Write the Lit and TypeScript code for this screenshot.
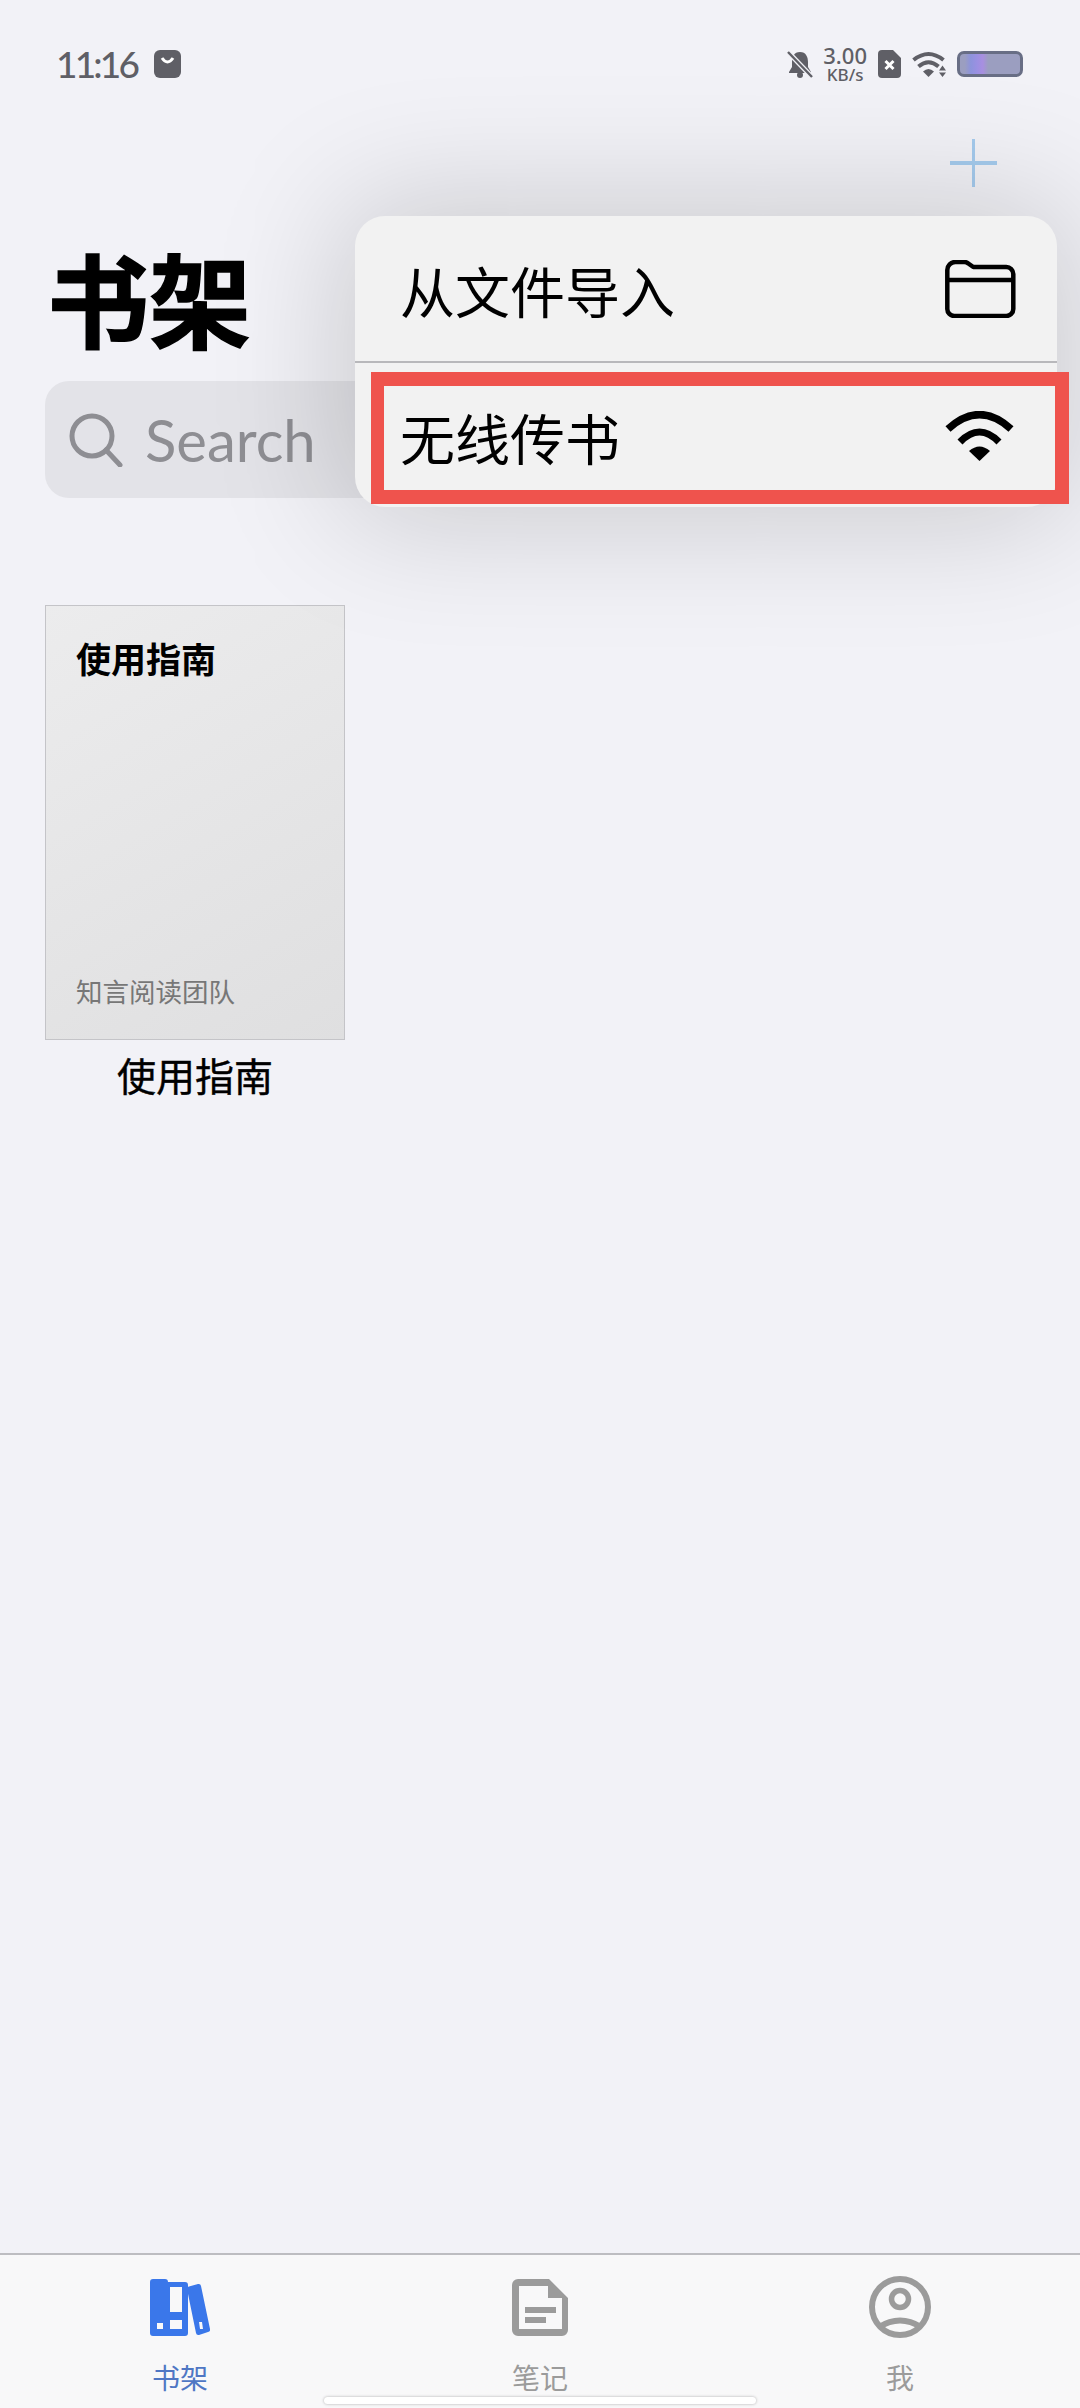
import { LitElement, html, css } from 'lit';
import { customElement, state } from 'lit/decorators.js';
import { classMap } from 'lit/directives/class-map.js';

const statusGrey = '#5f5f66';

const bellIcon = html`<svg class="bell" viewBox="0 0 26 27">
  <path fill="${statusGrey}" d="M13 1C7 1 5 6 5 11v5l-3 5v1h22v-1l-3-5v-5C21 6 19 1 13 1Z" />
  <circle cx="13" cy="24" r="3" fill="${statusGrey}" />
  <path d="M1 1 25 26" stroke="#f1f1f6" stroke-width="5" />
  <path d="M1 1 25 26" stroke="${statusGrey}" stroke-width="2.4" />
</svg>`;

const simIcon = html`<svg class="sim" viewBox="0 0 23 28">
  <path fill="${statusGrey}" d="M4 0h11l8 8v16a4 4 0 0 1-4 4H4a4 4 0 0 1-4-4V4a4 4 0 0 1 4-4Z" />
  <path d="M7.500 11 15.500 19M15.500 11 7.500 19" stroke="#fff" stroke-width="3" />
</svg>`;

const statusWifi = html`<svg class="status-wifi" viewBox="0 0 35 26" fill="none" stroke="${statusGrey}">
  <path stroke-width="4" d="M1.500 9Q16.500 -3 31.500 9" />
  <path stroke-width="4" d="M6.500 15.500Q16.500 7 26.500 15.500" />
  <path stroke="none" fill="${statusGrey}" d="M11 20.500Q16.500 15.500 22 20.500L16.500 26Z" />
  <path stroke="none" fill="${statusGrey}" d="M27 19.500l3.500-5 3.500 5ZM27 21.500h7l-3.500 4.500Z" />
</svg>`;

const folderIcon = html`<svg class="folder" viewBox="0 0 71 58" fill="none" stroke="#000" stroke-width="4.500">
  <path stroke-linejoin="round" d="M2.300 10a8 8 0 0 1 8-8h9a6 6 0 0 1 4 1.500l5 3.500h33a7 7 0 0 1 7 7v35a7 7 0 0 1-7 7H9.300a7 7 0 0 1-7-7Z" />
  <path d="M2.300 20H68.500" />
</svg>`;

const wifiIcon = html`<svg class="wifi" viewBox="0 0 69 50" fill="none" stroke="#000">
  <path stroke-width="7.500" d="M3 18Q34.500 -10.600 66 18" />
  <path stroke-width="7" d="M15 31Q34.500 11 54 31" />
  <path stroke="none" fill="#000" d="M24 40Q34.500 31 45 40L34.500 50Z" />
</svg>`;

const shelfIcon = html`<svg viewBox="0 0 60 57" width="60" height="57" fill="#3a77ea">
  <path fill-rule="evenodd" d="M3 0h12a3 3 0 0 1 3 3h17a3 3 0 0 1 3 3v48a3 3 0 0 1-3 3H3a3 3 0 0 1-3-3V3a3 3 0 0 1 3-3ZM20 8v25h12V8ZM20 41v9h12v-9ZM7 44v6h6v-6Z" />
  <path fill-rule="evenodd" d="M39 7.500 48 5a2.500 2.500 0 0 1 3 2l9 43a2.500 2.500 0 0 1-2 3l-9 3a2.500 2.500 0 0 1-3-2L37 10a2.500 2.500 0 0 1 2-2.500ZM49 43l1 7h3l-1-7Z" />
</svg>`;

const noteIcon = html`<svg viewBox="0 0 56 57" width="56" height="57" fill="#9b9b9b">
  <path fill-rule="evenodd" d="M6 0h31l19 19v32a6 6 0 0 1-6 6H6a6 6 0 0 1-6-6V6a6 6 0 0 1 6-6ZM7 7v43h43V19H36V7Z" />
  <rect x="13" y="28" width="31" height="6" />
  <rect x="13" y="38" width="21" height="6" />
</svg>`;

const meIcon = html`<svg viewBox="0 0 62 62" width="62" height="62" fill="none" stroke="#9b9b9b">
  <circle cx="31" cy="31" r="28" stroke-width="6" />
  <circle cx="31" cy="23" r="8.500" stroke-width="5.500" />
  <path stroke-width="6" d="M10 51Q31 38 52 51" />
</svg>`;

@customElement('app-root')
export class AppRoot extends LitElement {
  @state() private activeTab = 0;

  private tabs = [
    { label: '书架', icon: shelfIcon },
    { label: '笔记', icon: noteIcon },
    { label: '我', icon: meIcon },
  ];

  static styles = css`
    :host {
      display: block;
      width: 1080px;
      height: 2408px;
      font-family: 'Noto Sans CJK SC', 'Noto Sans', sans-serif;
      color: #000;
    }

    .page {
      position: relative;
      width: 100%;
      height: 100%;
      display: flex;
      flex-direction: column;
      background: #f2f2f7;
      overflow: hidden;
    }

    /* status bar */
    .status {
      display: flex;
      align-items: center;
      justify-content: space-between;
      height: 40px;
      margin-top: 44px;
      padding: 0 57px 0 56px;
      color: #5f5f66;
    }
    .status-left,
    .status-right {
      display: flex;
      align-items: center;
    }
    .time {
      font-family: Lato, 'Noto Sans', sans-serif;
      font-size: 37px;
      font-weight: 500;
      line-height: 40px;
      letter-spacing: -2.8px;
    }
    .notify {
      display: block;
      width: 27px;
      height: 28px;
      margin-left: 17px;
    }
    .bell {
      display: block;
      width: 26px;
      height: 27px;
    }
    .speed {
      display: flex;
      flex-direction: column;
      align-items: center;
      margin-left: 10px;
      font-family: 'Noto Sans', sans-serif;
      font-weight: 500;
    }
    .speed b {
      font-size: 22px;
      font-weight: 500;
      line-height: 21px;
    }
    .speed span {
      font-size: 17px;
      line-height: 17px;
    }
    .sim {
      display: block;
      width: 23px;
      height: 28px;
      margin-left: 11px;
    }
    .status-wifi {
      display: block;
      width: 35px;
      height: 26px;
      margin-left: 11px;
    }
    .battery {
      box-sizing: border-box;
      width: 66px;
      height: 26px;
      margin-left: 10px;
      border: 3px solid #686e85;
      border-radius: 7px;
      background: linear-gradient(
        90deg,
        #9b9ec0 8%,
        #8d93dc 18%,
        #9a90e2 28%,
        #a88fe0 38%,
        #9b9ec0 47%
      );
    }

    /* header */
    .nav {
      display: flex;
      justify-content: flex-end;
      margin-top: 55px;
      padding-right: 83px;
    }
    .plus {
      display: block;
      width: 47px;
      height: 48px;
    }
    h1 {
      margin: 60px 0 0 47px;
      font-size: 102px;
      line-height: 100px;
      font-weight: 700;
      -webkit-text-stroke: 1.5px #000;
    }
    .search {
      display: flex;
      align-items: center;
      height: 117px;
      margin: 34px 45px 0;
      padding-left: 24px;
      border-radius: 24px;
      background: #e3e3e8;
    }
    .search svg {
      display: block;
      width: 54px;
      height: 54px;
    }
    .search span {
      margin-left: 22px;
      font-family: Lato, 'Noto Sans', sans-serif;
      font-size: 58px;
      color: #8e8e93;
    }

    /* shelf */
    .shelf {
      flex: 1;
      margin: 107px 0 0 45px;
    }
    .book {
      width: 300px;
    }
    .cover {
      box-sizing: border-box;
      display: flex;
      flex-direction: column;
      justify-content: space-between;
      height: 435px;
      padding: 28px 0 30px 30px;
      border: 1px solid #c4c4c8;
      background: linear-gradient(150deg, #ececed, #dfdfe0);
    }
    .cover-title {
      font-size: 35px;
      line-height: 48px;
      font-weight: 700;
    }
    .cover-author {
      font-size: 26.500px;
      line-height: 36px;
      color: #777;
    }
    .book-name {
      margin-top: 6px;
      font-size: 39px;
      line-height: 56px;
      text-align: center;
      -webkit-text-stroke: 0.4px #000;
    }

    /* tab bar */
    .tabbar {
      height: 155px;
      box-sizing: border-box;
      display: flex;
      flex-direction: column;
      align-items: center;
      border-top: 2px solid #bdbdc1;
      background: #f8f8f9;
    }
    .tabs {
      align-self: stretch;
      display: grid;
      grid-template-columns: repeat(3, 1fr);
    }
    .tab {
      display: flex;
      flex-direction: column;
      align-items: center;
      padding-top: 21px;
      color: #9b9b9b;
      font-size: 28px;
      line-height: 36px;
    }
    .tab.active {
      color: #4f77c4;
    }
    .tab-icon {
      display: flex;
      align-items: center;
      justify-content: center;
      height: 62px;
      margin-bottom: 21px;
    }
    .home {
      width: 432px;
      height: 7px;
      margin-top: 2px;
      border-radius: 4px;
      background: #fff;
      box-shadow: 0 0 3px rgba(0, 0, 0, 0.3);
    }

    /* popup menu, sits over the page */
    .menu {
      position: absolute;
      left: 355px;
      top: 216px;
      width: 702px;
      height: 291px;
      border-radius: 30px;
      background: #f2f2f2;
      box-shadow: 0 0 130px 14px rgba(0, 0, 0, 0.17);
    }
    .menu-row {
      box-sizing: border-box;
      display: flex;
      align-items: center;
      justify-content: space-between;
      height: 145px;
      padding: 0 41px 0 45px;
      font-size: 55px;
    }
    .menu-row.first {
      height: 147px;
      border-bottom: 2px solid #b8b8bb;
    }
    .folder {
      display: block;
      width: 71px;
      height: 58px;
    }
    .wifi {
      display: block;
      width: 69px;
      height: 50px;
      margin-right: 2px;
    }

    /* red annotation frame round the second row */
    .mark {
      position: absolute;
      left: 16px;
      top: 156px;
      width: 698px;
      height: 132px;
      box-sizing: border-box;
      border: 14px solid #ef534d;
      border-left-width: 13px;
    }
  `;

  render() {
    return html`
      <div class="page">
        <div class="status">
          <div class="status-left">
            <span class="time">11:16</span>
            <svg class="notify" viewBox="0 0 27 28">
              <rect width="27" height="28" rx="6" fill="${statusGrey}" />
              <path d="M8 8Q13.500 16 19 8" fill="none" stroke="#fff" stroke-width="3" />
            </svg>
          </div>
          <div class="status-right">
            ${bellIcon}
            <div class="speed"><b>3.00</b><span>KB/s</span></div>
            ${simIcon} ${statusWifi}
            <div class="battery"></div>
          </div>
        </div>

        <div class="nav">
          <svg class="plus" viewBox="0 0 47 48">
            <path d="M23.500 0V48" stroke="#a5cbee" stroke-width="3" />
            <path d="M0 24H47" stroke="#a5cbee" stroke-width="4" />
          </svg>
        </div>

        <h1>书架</h1>

        <div class="search">
          <svg viewBox="0 0 54 54" fill="none" stroke="#8e8e93" stroke-width="5">
            <circle cx="23" cy="23" r="20" />
            <path d="M37 37 51 52" stroke-linecap="round" />
          </svg>
          <span>Search</span>
        </div>

        <div class="shelf">
          <div class="book">
            <div class="cover">
              <div class="cover-title">使用指南</div>
              <div class="cover-author">知言阅读团队</div>
            </div>
            <div class="book-name">使用指南</div>
          </div>
        </div>

        <div class="tabbar">
          <div class="tabs">
            ${this.tabs.map(
              (t, i) => html`
                <div class=${classMap({ tab: true, active: i === this.activeTab })}>
                  <div class="tab-icon">${t.icon}</div>
                  <span>${t.label}</span>
                </div>
              `
            )}
          </div>
          <div class="home"></div>
        </div>

        <div class="menu">
          <div class="menu-row first"><span>从文件导入</span>${folderIcon}</div>
          <div class="menu-row"><span>无线传书</span>${wifiIcon}</div>
          <div class="mark"></div>
        </div>
      </div>
    `;
  }
}
